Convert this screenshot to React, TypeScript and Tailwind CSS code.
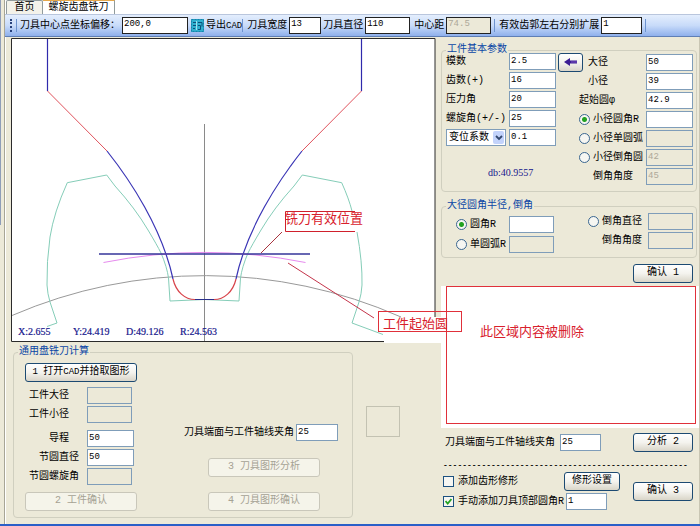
import type { ReactNode } from "react";
import { clsx } from "clsx";

interface FieldProps {
  id: string;
  label?: string;
  value?: string;
  disabled?: boolean;
  className?: string;
}

function Field({ id, label, value = "", disabled, className }: FieldProps) {
  return (
    <input
      id={id}
      type="text"
      aria-label={label}
      defaultValue={value}
      disabled={disabled}
      className={clsx(
        "h-[17px] shrink-0 border border-[#7f9db9] pl-px pb-[2px] text-[9px] outline-none",
        disabled ? "bg-[#ece9d8] text-[#aca899]" : "bg-white text-black",
        className
      )}
    />
  );
}

function ToolField({ id, label, value, disabled, className }: FieldProps) {
  return (
    <>
      <label htmlFor={id} className="whitespace-nowrap">
        {label}
      </label>
      <input
        id={id}
        type="text"
        defaultValue={value}
        disabled={disabled}
        className={clsx(
          "ml-[2px] h-[17px] shrink-0 border border-[#222] pl-px pb-[3px] text-[9px] outline-none",
          disabled ? "bg-[#ece9d8] text-[#aca899]" : "bg-white text-black",
          className
        )}
      />
    </>
  );
}

function XpButton({ children, disabled, className }: { children: ReactNode; disabled?: boolean; className?: string }) {
  return (
    <button
      type="button"
      disabled={disabled}
      className={clsx(
        "flex h-[19px] shrink-0 items-center justify-center whitespace-pre rounded-[3px] border pb-px",
        disabled
          ? "border-[#c9c7ba] bg-[#f5f4ea] text-[#a5a294]"
          : "border-[#1c4a72] bg-linear-to-b from-white via-[#f4f3ee] to-[#d9d5c8]",
        className
      )}
    >
      {children}
    </button>
  );
}

function Radio({ id, name, checked }: { id: string; name: string; checked?: boolean }) {
  return (
    <input
      id={id}
      type="radio"
      name={name}
      defaultChecked={checked}
      className="h-[11px] w-[11px] shrink-0 appearance-none rounded-full border border-[#3a6690] bg-[#f6f6f2] checked:bg-[radial-gradient(circle,#21a121_0_2px,#f6f6f2_3px)]"
    />
  );
}

function Check({ id, label, checked }: { id: string; label: string; checked?: boolean }) {
  return (
    <label htmlFor={id} className="relative flex items-center gap-[4px] whitespace-nowrap">
      <input
        id={id}
        type="checkbox"
        defaultChecked={checked}
        className="peer h-[11px] w-[11px] shrink-0 appearance-none border border-[#1c5180] bg-[#f6f6f2]"
      />
      <svg
        className="pointer-events-none absolute left-[2px] hidden h-[7px] w-[7px] peer-checked:block"
        viewBox="0 0 7 7"
      >
        <path d="M0.5 3 L2.7 5.5 L6.5 1" fill="none" stroke="#21a121" strokeWidth="1.8" />
      </svg>
      {label}
    </label>
  );
}

function Group({ title, className, children }: { title: string; className?: string; children: ReactNode }) {
  return (
    <fieldset className={clsx("min-w-0 rounded-[4px] border border-[#d0cfbf]", className)}>
      <legend className="ml-[4px] px-px leading-[6px] whitespace-nowrap text-[#0a46a5]">{title}</legend>
      {children}
    </fieldset>
  );
}

function Separator({ className }: { className?: string }) {
  return <span className={clsx("h-[13px] w-px shrink-0 bg-[#6d93cf]", className)} />;
}

function Toolbar() {
  return (
    <div className="flex h-[23px] items-center overflow-hidden border-t border-b border-t-[#b9c6dd] border-b-[#5f7fb5] bg-linear-to-b from-[#e4eefd] via-[#c8dbf9] to-[#8fb0ec] pl-[5px]">
      <span className="h-[13px] w-0 shrink-0 border-l-2 border-dotted border-[#27417c]" />
      <Separator className="ml-[4px] mr-[3px]" />
      <ToolField id="offset" label="刀具中心点坐标偏移：" value="200,0" className="w-[66px]" />
      <button type="button" className="ml-[3px] flex shrink-0 items-center gap-[2px] whitespace-nowrap">
        <svg className="h-[13px] w-[13px]" viewBox="0 0 13 13">
          <rect width="13" height="13" fill="#2fb0cf" />
          <path d="M0.5 12.5V0.5H12.5V12.5Z" fill="none" stroke="#1583ab" strokeDasharray="2 1" />
          <path d="M2 3.500H5M2 6.500H5M2 9.500H4M7 3.500H11V7.500M7 6.500H9.500V10.500H7" fill="none" stroke="#0b4f7a" />
          <path d="M5.500 2V11" stroke="#9fe0ef" />
        </svg>
        <span>
          导出<span className="text-[9px]">CAD</span>
        </span>
      </button>
      <Separator className="mr-[4px]" />
      <ToolField id="width" label="刀具宽度" value="13" className="mr-[2px] w-[32px]" />
      <ToolField id="diameter" label="刀具直径" value="110" className="mr-[4px] w-[45px]" />
      <ToolField id="distance" label="中心距" value="74.5" disabled className="w-[45px]" />
      <Separator className="ml-[3px] mr-[4px]" />
      <ToolField id="extend" label="有效齿郭左右分别扩展" value="1" className="w-[41px]" />
      <Separator className="ml-[3px]" />
    </div>
  );
}

const toothHalf =
  "M47 326.5 L57 323 L50 302 Q47.5 294 47 285 Q46.500 262 50 237 Q54 212 67.300 182.700 L106.700 175 L115 186 Q135 208 148 230 Q157 245 161 253 Q167 267 168.500 278 L170 301 L204.500 299.500";

function Drawing() {
  return (
    <svg
      viewBox="11 38 429 306"
      className="relative z-10 block h-auto w-full overflow-visible font-['Noto_Sans_CJK_SC',sans-serif]"
      fill="none"
    >
      <rect x="11" y="38" width="424" height="304" fill="#fff" />
      <rect x="384" y="317" width="57" height="26" fill="#fff" />
      <path d="M384 341.500 H11.500 V38.500 H435 V317" stroke="#2b2b2b" />

      <path d="M204.500 124V341" stroke="#8a8a8a" />
      <path d="M12 315.500 A486 486 0 0 1 401 317" stroke="#999" />

      {/* work piece teeth */}
      <path d={toothHalf} stroke="#85cdb8" />
      <path
        d="M383 334.500 L352 323 L359 302 Q361.500 294 362 285 Q362.500 262 357 232 M352 211 Q349 199 341.700 182.700 L302.300 175 L294 186 Q274 208 261 230 Q252 245 248 253 Q242 267 240.500 278 L239 301 L204.500 299.500"
        stroke="#85cdb8"
      />

      {/* cutter profile */}
      <path d="M47.500 39V91 M361.500 39V91" stroke="#2f2aac" strokeWidth="1.2" />
      <path d="M47.500 91 L107 151 M361.500 91 L302 151" stroke="#e0525c" />
      <path d="M107 151 C130 180 162 228 173 279 M302 151 C279 180 247 228 236 279" stroke="#3a35b5" strokeWidth="1.2" />
      <path d="M173 279 C176 292 185 299.500 195 299.500 M236 279 C233 292 224 299.500 214 299.500" stroke="#d8434a" strokeWidth="1.2" />
      <path d="M195 299.500H214" stroke="#2b2f8c" />

      <path d="M103.500 262.500 A515 515 0 0 1 305.500 262.500" stroke="#e68bee" />
      <path d="M99 254H310" stroke="#34349a" strokeWidth="1.400" />

      {/* notes */}
      <path d="M355 211.500H285.500V231.500H355" stroke="#d0202c" />
      <path d="M282 232 L261 253" stroke="#a8343f" />
      <path d="M288 263 L374 318" stroke="#c4344a" />
      <text x="285" y="223" fontSize="13" fill="#d8202c">铣刀有效位置</text>
      <rect x="378.500" y="311.500" width="83" height="20" stroke="#e0303a" />
      <text x="383" y="328" fontSize="13" fill="#d8202c">工件起始圆</text>

      <g className="font-['Liberation_Serif',serif]" fontSize="10" fill="#16168c" stroke="#16168c" strokeWidth="0.2">
        <text x="18" y="335">X:2.655</text>
        <text x="73" y="335">Y:24.419</text>
        <text x="126" y="335">D:49.126</text>
        <text x="180" y="335">R:24.563</text>
      </g>
    </svg>
  );
}

function DiscCutter() {
  return (
    <div className="mt-[5px] flex">
      <Group title="通用盘铣刀计算" className="ml-[2px] h-[169px] flex-1">
        <div className="flex justify-between pl-[11px] pr-[14px] pt-[8px]">
          <div className="flex w-[112px] flex-col">
            <XpButton className="w-full">
              <span>
                <span className="text-[9px]">1 </span>打开<span className="text-[9px]">CAD</span>并拾取图形
              </span>
            </XpButton>
            <div className="mt-[5px] flex items-center">
              <label htmlFor="bigD" className="w-[62px] pl-[4px]">工件大径</label>
              <Field id="bigD" disabled className="w-[45px]" />
            </div>
            <div className="mt-[2px] flex items-center">
              <label htmlFor="smallD" className="w-[62px] pl-[4px]">工件小径</label>
              <Field id="smallD" disabled className="w-[45px]" />
            </div>
            <div className="mt-[7px] flex items-center">
              <label htmlFor="lead" className="w-[62px] pl-[24px]">导程</label>
              <Field id="lead" value="50" className="w-[47px]" />
            </div>
            <div className="mt-[2px] flex items-center">
              <label htmlFor="pitchD" className="w-[62px] pl-[14px]">节圆直径</label>
              <Field id="pitchD" value="50" className="w-[47px]" />
            </div>
            <div className="mt-[2px] flex items-center">
              <label htmlFor="pitchA" className="w-[62px] pl-[4px]">节圆螺旋角</label>
              <Field id="pitchA" disabled className="w-[45px]" />
            </div>
            <XpButton disabled className="mt-[7px] w-full">2 工件确认</XpButton>
          </div>
          <div className="flex flex-col justify-end">
            <div className="flex items-center gap-[2px]">
              <label htmlFor="angleA" className="whitespace-nowrap">刀具端面与工件轴线夹角</label>
              <Field id="angleA" value="25" className="w-[42px]" />
            </div>
            <XpButton disabled className="mt-[17px] ml-[24px] w-[112px]">3 刀具图形分析</XpButton>
            <XpButton disabled className="mt-[15px] ml-[24px] w-[112px]">4 刀具图形确认</XpButton>
          </div>
        </div>
      </Group>
      <div className="w-[87px] pl-[13px] pt-[57px]">
        <div className="h-[31px] w-[34px] border border-[#c3c2b2]" />
      </div>
    </div>
  );
}

const baseRows = [
  { id: "module", label: "模数", value: "2.5" },
  { id: "teeth", label: "齿数(+)", value: "16" },
  { id: "pressure", label: "压力角", value: "20" },
  { id: "helix", label: "螺旋角(+/-)", value: "25" },
];

const rootRows = [
  { id: "rootR", label: "小径圆角R", value: "", disabled: false },
  { id: "rootArc", label: "小径单圆弧", value: "", disabled: true },
  { id: "rootChamfer", label: "小径倒角圆", value: "42", disabled: true },
];

function BaseParams() {
  return (
    <Group title="工件基本参数" className="mt-[10px] ml-px mr-[2px] pb-[6px]">
      <div className="flex pl-[4px] pr-[3px]">
        <div className="flex w-[110px] flex-col gap-[2px]">
          {baseRows.map((row) => (
            <div key={row.id} className="flex items-center">
              <label htmlFor={row.id} className="w-[63px] whitespace-nowrap">{row.label}</label>
              <Field id={row.id} value={row.value} className="w-[47px]" />
            </div>
          ))}
          <div className="flex items-center justify-between">
            <div className="relative">
              <select
                aria-label="系数"
                className="block h-[17px] w-[60px] appearance-none border border-[#7f9db9] bg-white pl-[2px] leading-[14px] outline-none"
              >
                <option>变位系数</option>
              </select>
              <span className="pointer-events-none absolute top-[2px] right-[2px] flex h-[13px] w-[11px] items-center justify-center rounded-[2px] bg-[#c3d3fb]">
                <svg className="h-[6px] w-[8px]" viewBox="0 0 8 6">
                  <path d="M1 1 L4 4 L7 1" fill="none" stroke="#34496f" strokeWidth="1.8" />
                </svg>
              </span>
            </div>
            <Field id="shift" label="变位系数" value="0.1" className="w-[47px]" />
          </div>
          <p className="mt-[19px] pl-[42px] font-['Liberation_Serif',serif] text-[#16168c]">db:40.9557</p>
        </div>

        <div className="flex flex-1 flex-col gap-[2px] pt-px">
          <div className="flex h-[17px] items-center">
            <XpButton className="ml-[2px] w-[25px]">
              <svg className="h-[8px] w-[13px]" viewBox="0 0 13 8">
                <path d="M0 4 L6 0 V2.500 H13 V5.500 H6 V8 Z" fill="#3a1c93" />
                <path d="M7 4H13" stroke="#7b4fc4" />
              </svg>
            </XpButton>
            <label htmlFor="major" className="flex-1 pl-[5px]">大径</label>
            <Field id="major" value="50" className="w-[47px]" />
          </div>
          <div className="flex items-center">
            <label htmlFor="minor" className="flex-1 pl-[32px]">小径</label>
            <Field id="minor" value="39" className="w-[47px]" />
          </div>
          <div className="flex items-center">
            <label htmlFor="start" className="flex-1 pl-[23px]">起始圆φ</label>
            <Field id="start" value="42.9" className="w-[47px]" />
          </div>
          {rootRows.map((row, i) => (
            <div key={row.id} className="flex items-center">
              <span className="flex flex-1 items-center gap-[3px] pl-[23px]">
                <Radio id={row.id} name="root" checked={i === 0} />
                <label htmlFor={row.id} className="whitespace-nowrap">{row.label}</label>
              </span>
              <Field id={`${row.id}Value`} label={row.label} value={row.value} disabled={row.disabled} className="w-[47px]" />
            </div>
          ))}
          <div className="flex items-center">
            <label htmlFor="rootAngle" className="flex-1 pl-[37px]">倒角角度</label>
            <Field id="rootAngle" value="45" disabled className="w-[47px]" />
          </div>
        </div>
      </div>
    </Group>
  );
}

function TipParams() {
  return (
    <Group title="大径圆角半径,倒角" className="mt-[11px] ml-px mr-[2px] pb-[4px]">
      <div className="flex justify-between pl-[14px] pr-[3px]">
        <div className="flex flex-col gap-[3px] pt-[7px]">
          <div className="flex items-center">
            <span className="flex w-[53px] items-center gap-[3px]">
              <Radio id="tipR" name="tip" checked />
              <label htmlFor="tipR">圆角R</label>
            </span>
            <Field id="tipRValue" label="圆角R" className="w-[45px]" />
          </div>
          <div className="flex items-center">
            <span className="flex w-[53px] items-center gap-[3px]">
              <Radio id="tipArc" name="tip" />
              <label htmlFor="tipArc" className="whitespace-nowrap">单圆弧R</label>
            </span>
            <Field id="tipArcValue" label="单圆弧R" disabled className="w-[45px]" />
          </div>
        </div>
        <div className="flex flex-col gap-[2px] pt-[4px]">
          <div className="flex items-center">
            <span className="flex w-[60px] items-center gap-[3px]">
              <Radio id="tipChamfer" name="tip" />
              <label htmlFor="tipChamfer" className="whitespace-nowrap">倒角直径</label>
            </span>
            <Field id="tipChamferValue" label="倒角直径" disabled className="w-[45px]" />
          </div>
          <div className="flex items-center">
            <label htmlFor="tipAngle" className="w-[60px] pl-[14px]">倒角角度</label>
            <Field id="tipAngle" disabled className="w-[45px]" />
          </div>
        </div>
      </div>
    </Group>
  );
}

export default function App() {
  return (
    <div className="flex min-h-screen border-b-2 border-[#2a5fc8] bg-[#ece9d8] font-['Liberation_Mono','Noto_Sans_CJK_SC',monospace] text-[10px] leading-[12px] text-black">
      <div className="w-[5px] shrink-0 border-r border-[#a7a596]">
        <div className="h-[225px] w-px bg-[#8f9db8]" />
      </div>
      <main className="min-w-0 flex-1">
        <nav className="flex h-[14px] items-end bg-white pl-px">
          <a href="#home" className="flex h-[14px] w-[37px] items-center justify-center rounded-t-[2px] border border-b-0 border-[#919b9c] bg-[#f3f2ea]">
            首页
          </a>
          <a href="#helical" className="flex h-[14px] w-[72px] items-center justify-center whitespace-nowrap border-t border-r border-t-[#e5a84b] border-r-[#919b9c] bg-white">
            螺旋齿盘铣刀
          </a>
        </nav>
        <Toolbar />

        <div className="flex">
          <section className="min-w-0 flex-1 border-l border-white pt-px pl-[5px]">
            <Drawing />
            <DiscCutter />
          </section>

          <section className="w-[260px] shrink-0 border-r border-[#c9c6b4] pb-[14px]">
            <BaseParams />
            <TipParams />
            <div className="mt-[6px] flex justify-end pr-[6px]">
              <XpButton className="w-[60px]">确认 1</XpButton>
            </div>

            <div className="mt-[3px] ml-px h-[142px] bg-white pl-[5px] pr-[3px]">
              <div className="h-[138px] border border-[#e0303a] pt-[36px] pl-[33px] font-['Noto_Sans_CJK_SC',sans-serif] text-[13px] leading-[16px] text-[#d8202c]">
                此区域内容被删除
              </div>
            </div>

            <div className="mt-[5px] flex items-center pr-[6px] pl-[5px]">
              <label htmlFor="angleB" className="w-[115px] whitespace-nowrap">刀具端面与工件轴线夹角</label>
              <Field id="angleB" value="25" className="w-[41px]" />
              <XpButton className="ml-auto w-[60px]">分析 2</XpButton>
            </div>

            <p className="mt-[7px] overflow-hidden pl-[3px] text-[8px] font-bold whitespace-nowrap" aria-hidden="true">
              ---------------------------------------------------
            </p>

            <div className="mt-px flex items-center pr-[6px] pl-[3px]">
              <div className="flex flex-col gap-[2px]">
                <div className="flex items-center">
                  <span className="w-[121px]">
                    <Check id="modify" label="添加齿形修形" />
                  </span>
                  <XpButton className="w-[56px]">修形设置</XpButton>
                </div>
                <div className="flex items-center">
                  <span className="w-[123px]">
                    <Check id="manual" label="手动添加刀具顶部圆角R" checked />
                  </span>
                  <Field id="topR" label="顶部圆角R" value="1" className="w-[41px]" />
                </div>
              </div>
              <XpButton className="ml-auto w-[60px]">确认 3</XpButton>
            </div>
          </section>
        </div>
      </main>
    </div>
  );
}
